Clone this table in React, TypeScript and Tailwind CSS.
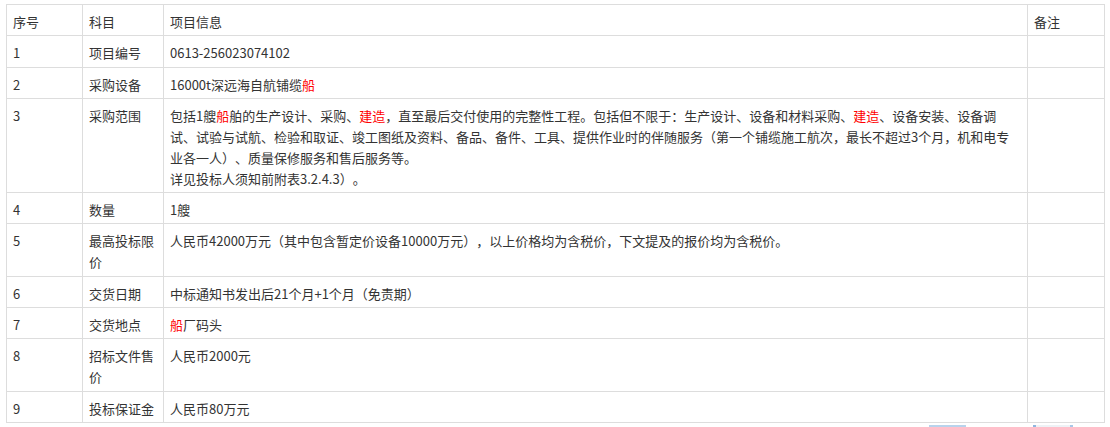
import React from 'react';

type Row = {
  no: string;
  item: string;
  info: React.ReactNode;
};

const Red: React.FC<{ children: React.ReactNode }> = ({ children }) => (
  <span className="text-[#ff0000]">{children}</span>
);

const rows: Row[] = [
  { no: '1', item: '项目编号', info: '0613-256023074102' },
  {
    no: '2',
    item: '采购设备',
    info: (
      <>
        16000t深远海自航铺缆<Red>船</Red>
      </>
    ),
  },
  {
    no: '3',
    item: '采购范围',
    info: (
      <>
        包括1艘<Red>船</Red>舶的生产设计、采购、<Red>建造</Red>
        ，直至最后交付使用的完整性工程。包括但不限于：生产设计、设备和材料采购、<Red>建造</Red>
        、设备安装、设备调试、试验与试航、检验和取证、竣工图纸及资料、备品、备件、工具、提供作业时的伴随服务（第一个铺缆施工航次，最长不超过3个月，机和电专业各一人）、质量保修服务和售后服务等。
        <br />
        详见投标人须知前附表3.2.4.3）。
      </>
    ),
  },
  { no: '4', item: '数量', info: '1艘' },
  {
    no: '5',
    item: '最高投标限价',
    info: '人民币42000万元（其中包含暂定价设备10000万元），以上价格均为含税价，下文提及的报价均为含税价。',
  },
  { no: '6', item: '交货日期', info: '中标通知书发出后21个月+1个月（免责期）' },
  {
    no: '7',
    item: '交货地点',
    info: (
      <>
        <Red>船</Red>厂码头
      </>
    ),
  },
  { no: '8', item: '招标文件售价', info: '人民币2000元' },
  { no: '9', item: '投标保证金', info: '人民币80万元' },
];

const cell = 'border border-[#dddddd] align-top pt-[6px] pb-[3.3px] pl-[6px] pr-[5px]';

export default function App() {
  return (
    <div
      className="bg-white text-[#333333] text-[13px] leading-[21px] [text-spacing-trim:space-all] pt-[4px] pl-[6px] w-[1110px] h-[427px] overflow-hidden"
      style={{ fontFamily: '"Noto Sans CJK SC", "Noto Sans", sans-serif' }}
    >
      <table className="border-collapse table-fixed w-[1098px]">
        <colgroup>
          <col className="w-[76px]" />
          <col className="w-[81px]" />
          <col className="w-[864px]" />
          <col className="w-[77px]" />
        </colgroup>
        <tbody>
          <tr>
            <td className={cell}>序号</td>
            <td className={cell}>科目</td>
            <td className={cell}>项目信息</td>
            <td className={cell}>备注</td>
          </tr>
          {rows.map(row => (
            <tr key={row.no}>
              <td className={cell}>{row.no}</td>
              <td className={cell}>{row.item}</td>
              <td className={`${cell} pr-[14px]`}>{row.info}</td>
              <td className={cell}></td>
            </tr>
          ))}
        </tbody>
      </table>
      <div className="flex mt-[2px] h-[2px]">
        <div className="ml-[923px] w-[37px] h-full bg-[#b9d3ec]" />
        <div className="ml-[67px] w-[3px] h-full bg-[#8fb6e0]" />
        <div className="w-[34px] h-full bg-[#eef2f6]" />
        <div className="w-[3px] h-full bg-[#a9c8e8]" />
      </div>
    </div>
  );
}
